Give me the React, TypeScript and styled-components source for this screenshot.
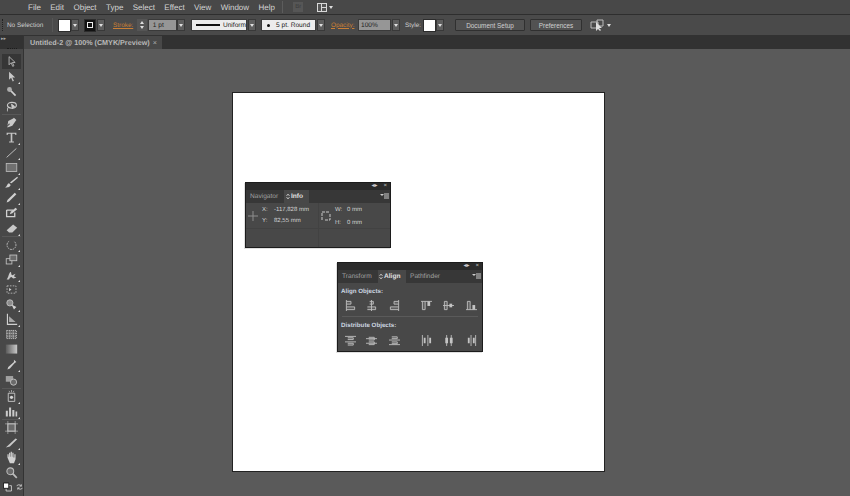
import React from "react";
import styled, { createGlobalStyle } from "styled-components";

const GlobalStyle = createGlobalStyle`
  *, *::before, *::after {
    box-sizing: border-box;
  }
  html, body {
    margin: 0;
    padding: 0;
    background: #5a5a5a;
  }
  body {
    width: 850px;
    height: 496px;
    overflow: hidden;
    font-family: "Liberation Sans", Arial, sans-serif;
    text-rendering: geometricPrecision;
  }
`;

const MENU = ["File", "Edit", "Object", "Type", "Select", "Effect", "View", "Window", "Help"];

type Tool = { icon: React.ReactNode; more?: boolean; active?: boolean };

// tool icons on a 16x16 box, split where the rail has a divider
const TOOL_GROUPS: Tool[][] = [
  [
    { active: true, icon: <path d="M5 2v10l2.500-2.500L9.500 14l1.500-.8-2-4h3.500z" fill="none" stroke="#c4c4c4" /> },
    { more: true, icon: <path d="M5 2v10l2.500-2.500L9.500 14l1.500-.8-2-4h3.500z" fill="#c8c8c8" /> },
    {
      icon: (
        <>
          <path d="M7 7l6 6" stroke="#cfcfcf" strokeWidth="2" />
          <circle cx="5.500" cy="5.500" r="3" fill="#adadad" />
        </>
      ),
    },
    {
      icon: (
        <>
          <ellipse cx="8.500" cy="6.500" rx="5.500" ry="3.600" fill="none" stroke="#c8c8c8" strokeWidth="1.400" />
          <path d="M4 9c-1 1-1 3-1 5M8 5l4 3-3 3z" stroke="#c8c8c8" fill="#c8c8c8" />
        </>
      ),
    },
  ],
  [
    { more: true, icon: <path d="M11 2l3 3-1 1-4 6-6 2 0-1 3-3-1-1-2 3 1-6 6-3z" fill="#cacaca" /> },
    { more: true, icon: <path d="M2 2h12v3h-1l-1-1.500H9V13h2v1H5v-1h2V3.500H4L3 5H2z" fill="#c4c4c4" /> },
    { more: true, icon: <path d="M2 14L14 3" stroke="#c8c8c8" strokeWidth="1.100" /> },
    { more: true, icon: <rect x="1.500" y="3" width="13" height="10" fill="#707070" stroke="#bdbdbd" /> },
    { more: true, icon: <path d="M15 1l1 1-8 7-2-1zM5 9l2 2c-1 3-4 3-7 3 3-1 2-4 5-5z" fill="#d0d0d0" /> },
    { more: true, icon: <path d="M12 2l2 2-9 9-3 1 1-3z" fill="#d0d0d0" /> },
    {
      icon: (
        <>
          <path d="M2 5h8M2 5v8h10V8" fill="none" stroke="#d0d0d0" strokeWidth="1.600" />
          <path d="M13 2l2 2-6 5-3 1 1-3z" fill="#d0d0d0" />
        </>
      ),
    },
    { more: true, icon: <path d="M10 3l5 4-6 6H5L2 10z" fill="#c8c8c8" /> },
  ],
  [
    { more: true, icon: <path d="M5 4a5.500 5.500 0 1 0 6 0" fill="none" stroke="#bdbdbd" strokeDasharray="2 1" strokeWidth="1.200" /> },
    {
      more: true,
      icon: (
        <>
          <rect x="1.500" y="7" width="7" height="6.500" fill="none" stroke="#c8c8c8" />
          <rect x="6" y="2.500" width="8.500" height="7" fill="#6a6a6a" stroke="#c8c8c8" />
        </>
      ),
    },
    { more: true, icon: <path d="M2 14c2-1 3-9 5-9 1 0 0 3 2 4l4-2-2 3 3 2-4 1-2-2-2 1-1 2z" fill="#cacaca" /> },
    {
      icon: (
        <>
          <rect x="2.500" y="3.500" width="11" height="9" fill="none" stroke="#c0c0c0" strokeDasharray="2 1.500" />
          <path d="M5 6l3 2-3 2z" fill="#d0d0d0" />
        </>
      ),
    },
    {
      more: true,
      icon: (
        <>
          <circle cx="6" cy="6" r="3.800" fill="#8c8c8c" stroke="#c8c8c8" />
          <path d="M8 8l6 3-3 3z" fill="#d4d4d4" />
        </>
      ),
    },
    {
      more: true,
      icon: (
        <>
          <path d="M3 1v13h12" fill="none" stroke="#d0d0d0" strokeWidth="1.400" />
          <path d="M5 4l8 7H5z" fill="#a8a8a8" />
        </>
      ),
    },
    { icon: <path d="M2 3h12v10H2zM6 3v10M10 3v10M2 6.500h12M2 10h12" fill="#5c5c5c" stroke="#cfcfcf" strokeDasharray="1.500 1" /> },
    {
      icon: (
        <>
          <linearGradient id="toolGrad">
            <stop offset="0" stopColor="#5a5a5a" />
            <stop offset="1" stopColor="#c8c8c8" />
          </linearGradient>
          <rect x="1" y="2" width="14" height="11" fill="url(#toolGrad)" />
        </>
      ),
    },
    { more: true, icon: <path d="M11 2l3 3-2 1-6 7-3 1 1-3 7-6z" fill="#cfcfcf" /> },
    {
      icon: (
        <>
          <rect x="1" y="2.500" width="9" height="7" fill="#a0a0a0" />
          <circle cx="10.500" cy="10" r="3.800" fill="#6a6a6a" stroke="#cfcfcf" />
        </>
      ),
    },
  ],
  [
    {
      more: true,
      icon: (
        <>
          <path d="M5 1l1 2M8 0v3M11 1l-1 2" stroke="#b0b0b0" />
          <path d="M4 4h8v10H4z" fill="none" stroke="#d4d4d4" />
          <circle cx="8" cy="9" r="2" fill="#d4d4d4" />
        </>
      ),
    },
    { more: true, icon: <path d="M1 14V7h2.500v7zM5 14V3h2.500v11zM9 14V6h2.500v8zM13 14V8h2v6z" fill="#cacaca" /> },
  ],
  [
    {
      icon: (
        <>
          <rect x="3.500" y="3.500" width="9" height="9" fill="#6a6a6a" stroke="#c8c8c8" />
          <path d="M3.500 0v16M12.500 0v16M0 3.500h16M0 12.500h16" stroke="#c8c8c8" strokeWidth=".7" />
        </>
      ),
    },
    { more: true, icon: <path d="M1 14L13 3l2 1-9 9z" fill="#cacaca" /> },
    { more: true, icon: <path d="M3 8V4h1.500v3H5V2h1.500v5H7V1h1.500v6H9V2h1.500v6l1 0V4H13v6l-2 5H6z" fill="#d0d0d0" /> },
    {
      icon: (
        <>
          <circle cx="6.500" cy="6.500" r="4.200" fill="#6a6a6a" stroke="#bdbdbd" strokeWidth="1.300" />
          <path d="M9.500 9.500l5 5" stroke="#bdbdbd" strokeWidth="2.200" />
        </>
      ),
    },
  ],
];

const Window = styled.div`
  width: 850px;
  height: 496px;
  display: flex;
  flex-direction: column;
  color: #d4d4d4;
`;
const MenuBar = styled.div`
  height: 15px;
  flex: none;
  display: flex;
  align-items: center;
  padding-left: 28px;
  background: #484848;
  border-bottom: 1px solid #2e2e2e;
`;
const MenuItem = styled.span`
  font-size: 8px;
  margin-right: 9.4px;
  color: #d4d4d4;
`;
const MenuSep = styled.div`
  width: 1px;
  height: 12px;
  background: #5c5c5c;
  margin: 0 10px 0 -2px;
`;
const BridgeBox = styled.div`
  width: 10px;
  height: 10px;
  background: #565656;
  color: #3a3a3a;
  font-size: 6px;
  text-align: center;
  line-height: 10px;
  margin-right: 14px;
`;
const ControlBar = styled.div`
  height: 20px;
  flex: none;
  display: flex;
  align-items: center;
  background: #4a4a4a;
`;
const Grip = styled.div`
  width: 1px;
  height: 12px;
  margin: 0 4px 0 2px;
  border-left: 1px dotted #222;
`;
const Label = styled.span<{ $w: number; $ml?: number; $accent?: boolean }>`
  width: ${(p) => p.$w}px;
  margin-left: ${(p) => p.$ml ?? 0}px;
  font-size: 6.4px;
  white-space: nowrap;
  color: ${(p) => (p.$accent ? "#c97f35" : "#cfcfcf")};
  text-decoration: ${(p) => (p.$accent ? "underline" : "none")};
`;
const BarSep = styled.div`
  width: 1px;
  height: 14px;
  margin-left: 2px;
  background: #565656;
`;
const FillSwatch = styled.div<{ $ml: number }>`
  width: 13px;
  height: 13px;
  margin-left: ${(p) => p.$ml}px;
  background: #fff;
  border: 1px solid #2c2c2c;
`;
const StrokeSwatch = styled.div`
  width: 12px;
  height: 13px;
  margin-left: 5px;
  background: #111;
  border: 1px solid #2c2c2c;
  display: flex;
  align-items: center;
  justify-content: center;
  &::after {
    content: "";
    width: 6px;
    height: 6px;
    border: 1.5px solid #eee;
  }
`;
const Drop = styled.div<{ $ml?: number }>`
  width: 8px;
  height: 12px;
  margin-left: ${(p) => p.$ml ?? 0}px;
  background: #5e5e5e;
  border: 1px solid #393939;
  display: flex;
  align-items: center;
  justify-content: center;
  &::after {
    content: "";
    border-left: 2.5px solid transparent;
    border-right: 2.5px solid transparent;
    border-top: 3px solid #e0e0e0;
  }
`;
const Spinner = styled.div`
  width: 10px;
  height: 12px;
  margin-left: 4px;
  display: flex;
  flex-direction: column;
  align-items: center;
  justify-content: center;
  gap: 2px;
  background: #555;
  &::before,
  &::after {
    content: "";
    border-left: 2.5px solid transparent;
    border-right: 2.5px solid transparent;
  }
  &::before {
    border-bottom: 3px solid #ddd;
  }
  &::after {
    border-top: 3px solid #ddd;
  }
`;
const Field = styled.div<{ $w: number; $ml?: number; $light?: boolean }>`
  width: ${(p) => p.$w}px;
  height: 12px;
  margin-left: ${(p) => p.$ml ?? 0}px;
  padding-left: 2px;
  display: flex;
  align-items: center;
  font-size: 6.6px;
  color: #222;
  background: ${(p) => (p.$light ? "#ececec" : "#969696")};
  border: 1px solid #3a3a3a;
  white-space: nowrap;
  overflow: hidden;
`;
const LineSample = styled.span`
  width: 25px;
  height: 1.5px;
  margin: 0 3px 0 2px;
  background: #111;
`;
const Dot = styled.span`
  width: 3px;
  height: 3px;
  margin: 0 6px 0 3px;
  border-radius: 50%;
  background: #111;
`;
const BarButton = styled.button<{ $w: number; $ml: number }>`
  width: ${(p) => p.$w}px;
  height: 12px;
  margin-left: ${(p) => p.$ml}px;
  padding: 0;
  font-family: inherit;
  font-size: 6.4px;
  color: #d0d0d0;
  background: #525252;
  border: 1px solid #303030;
  border-radius: 1px;
`;
const SmallArrow = styled.span<{ $ml: number }>`
  margin-left: ${(p) => p.$ml}px;
  border-left: 2.5px solid transparent;
  border-right: 2.5px solid transparent;
  border-top: 3px solid #ddd;
`;
const ActionIcon = styled.svg`
  margin-left: 8px;
  flex: none;
`;
const Main = styled.div`
  flex: 1;
  min-height: 0;
  display: flex;
`;
const ToolRail = styled.div`
  width: 24px;
  flex: none;
  background: #484848;
  border-right: 1px solid #333;
  display: flex;
  flex-direction: column;
`;
const RailHead = styled.div`
  height: 14px;
  flex: none;
  position: relative;
  background: #323232;
  color: #a8a8a8;
  font-size: 5px;
  line-height: 9px;
  padding-left: 1px;
`;
const RailGrip = styled.div`
  height: 1px;
  margin: 4px 6px 0;
  flex: none;
  border-top: 1px dotted #1c1c1c;
`;
const ToolList = styled.div`
  margin-top: 4.5px;
  display: flex;
  flex-direction: column;
`;
const ToolCell = styled.div<{ $active?: boolean }>`
  position: relative;
  height: 15.1px;
  margin: 0 2px;
  display: flex;
  align-items: center;
  justify-content: center;
  background: ${(p) => (p.$active ? "#363636" : "transparent")};
  svg {
    width: 13px;
    height: 13px;
  }
`;
const Corner = styled.span`
  position: absolute;
  right: 1px;
  bottom: 0;
  border-left: 2px solid transparent;
  border-bottom: 2px solid #ddd;
`;
const RailRule = styled.div`
  height: 1px;
  margin: 0 2px;
  background: #585858;
`;
const SwatchPair = styled.div`
  display: flex;
  align-items: center;
  gap: 4px;
  margin: 2px 0 0 3px;
`;
const Workspace = styled.div`
  flex: 1;
  display: flex;
  flex-direction: column;
  min-width: 0;
`;
const TabBar = styled.div`
  height: 14px;
  flex: none;
  display: flex;
  align-items: flex-end;
  background: #323232;
`;
const DocTab = styled.div`
  width: 138px;
  height: 13px;
  padding-left: 6px;
  display: flex;
  align-items: center;
  justify-content: space-between;
  font-size: 7.2px;
  font-weight: 700;
  color: #b8b8b8;
  background: #484848;
  white-space: nowrap;
`;
const TabClose = styled.span`
  margin-right: 5px;
  font-weight: 400;
  color: #aaa;
`;
const Canvas = styled.div`
  flex: 1;
  position: relative;
  background: #5a5a5a;
  padding: 43px 0 0 208px;
`;
const Artboard = styled.div`
  width: 373px;
  height: 380px;
  background: #fff;
  border: 1px solid #222;
`;
const Panel = styled.div<{ $x: number; $y: number; $h: number }>`
  position: absolute;
  left: ${(p) => p.$x}px;
  top: ${(p) => p.$y}px;
  width: 146px;
  height: ${(p) => p.$h}px;
  display: flex;
  flex-direction: column;
  background: #484848;
  border: 1px solid #1c1c1c;
  box-shadow: -1px 1px 0 rgba(0, 0, 0, 0.12);
`;
const PanelHead = styled.div`
  height: 7px;
  flex: none;
  display: flex;
  align-items: center;
  justify-content: flex-end;
  gap: 6px;
  padding-right: 3px;
  background: #2b2b2b;
  color: #d0d0d0;
  font-size: 6px;
  line-height: 7px;
`;
const PanelTabs = styled.div`
  height: 13px;
  flex: none;
  display: flex;
  align-items: stretch;
  background: #373737;
`;
const PanelTab = styled.div<{ $w: number; $pad?: number; $active?: boolean }>`
  width: ${(p) => p.$w}px;
  padding-left: ${(p) => p.$pad ?? 4}px;
  display: flex;
  align-items: center;
  gap: 1px;
  font-size: 6.6px;
  white-space: nowrap;
  font-weight: ${(p) => (p.$active ? 700 : 400)};
  color: ${(p) => (p.$active ? "#e0e0e0" : "#a0a0a0")};
  background: ${(p) => (p.$active ? "#484848" : "transparent")};
`;
const PanelMenu = styled.svg`
  margin: 3px 1px 0 auto;
  width: 9px;
  height: 7px;
  flex: none;
`;
const InfoBody = styled.div`
  flex: 1;
  display: grid;
  grid-template-columns: 72px 1fr;
  grid-template-rows: 25px 1fr;
`;
const InfoCell = styled.div<{ $right?: boolean; $bottom?: boolean }>`
  display: flex;
  align-items: flex-start;
  padding: 3px 0 0 2px;
  border-left: ${(p) => (p.$right ? "1px solid #424242" : "none")};
  border-top: ${(p) => (p.$bottom ? "1px solid #424242" : "none")};
`;
const InfoIcon = styled.svg<{ $mr: number }>`
  margin: 5px ${(p) => p.$mr}px 0 0;
  flex: none;
`;
const InfoGrid = styled.div<{ $col: number; $gap: number }>`
  display: grid;
  grid-template-columns: ${(p) => p.$col}px auto;
  row-gap: ${(p) => p.$gap}px;
  font-size: 6px;
  line-height: 8px;
  color: #d2d2d2;
  white-space: nowrap;
`;
const SectionTitle = styled.div<{ $mt: number }>`
  margin: ${(p) => p.$mt}px 0 0 3px;
  font-size: 6.2px;
  line-height: 8px;
  font-weight: 700;
  color: #ccd6e0;
`;
const AlignRow = styled.div`
  display: grid;
  grid-template-columns: 21px 23px 32px 22px 23px 11px;
  margin: 4.5px 0 0 7px;
  svg {
    width: 11px;
    height: 11px;
  }
`;
const Rule = styled.div`
  height: 1px;
  margin: 5px 4px 0;
  background: #5a5a5a;
`;

const AlignGlyph = ({ d, box }: { d: string; box: string }) => (
  <svg viewBox="0 0 12 12">
    <path d={d} fill="#5e5e5e" stroke="#bdbdbd" />
    <path d={box} fill="#c4c4c4" />
  </svg>
);

const TabArrows = () => (
  <svg width="4" height="7" viewBox="0 0 4 7">
    <path d="M.5 3L2 1l1.500 2M.5 4L2 6l1.500-2" fill="none" stroke="#d0d0d0" strokeWidth=".8" />
  </svg>
);

const ALIGN_GLYPHS = [
  ["M1.500 0v12M1.500 1.500h5v3h-5M1.500 7.500h9v3h-9", ""],
  ["M6 0v12M4 1.500h4v3H4M1.500 7.500h9v3h-9", ""],
  ["M10.500 0v12M10.500 1.500h-5v3h5M10.500 7.500h-9v3h9", ""],
  ["M0 1.500h12M1.500 1.500v9h3v-9", "M7 1.500h3v5H7z"],
  ["M0 6h12M1.500 1.500h3v9h-3z", "M7 4h3v4H7z"],
  ["M0 10.500h12M1.500 10.500v-9h3v9", "M7 5.500h3v5H7z"],
];
const DIST_GLYPHS = [
  ["M0 1.500h12M0 7.500h12M3 3h6v2H3M3 9h6v2H3", ""],
  ["M0 4h12M0 9h12M3 2.500h6v3H3M3 7.500h6v3H3", ""],
  ["M0 5.500h12M0 10.500h12M3 2h6v2H3M3 7.500h6v2H3", ""],
  ["M1.500 0v12M7.500 0v12", "M3 3h2v6H3zM9 3h2v6H9z"],
  ["M4 0v12M9 0v12", "M2.500 3h3v6h-3zM7.500 3h3v6h-3z"],
  ["M5.500 0v12M10.500 0v12", "M2 3h2v6H2zM7.500 3h2v6h-2z"],
];

const MenuGlyph = () => (
  <PanelMenu viewBox="0 0 9 7">
    <path d="M0 1l2 2 2-2z" fill="#ccc" />
    <path d="M4 1h5M4 3h5M4 5h5" stroke="#ccc" />
  </PanelMenu>
);

export default function App() {
  return (
    <>
      <GlobalStyle />
      <Window>
        <MenuBar>
          {MENU.map((m) => (
            <MenuItem key={m}>{m}</MenuItem>
          ))}
          <MenuSep />
          <BridgeBox>Br</BridgeBox>
          <svg width="10" height="9" viewBox="0 0 10 9">
            <path d="M0 0h10v9H0z" fill="#d8d8d8" />
            <path d="M1 1h3v7H1zM5 1h4v3H5zM5 5h4v3H5z" fill="#555" />
          </svg>
          <SmallArrow $ml={2} />
        </MenuBar>
        <ControlBar>
          <Grip />
          <Label $w={43}>No Selection</Label>
          <BarSep />
          <FillSwatch $ml={5} />
          <Drop />
          <StrokeSwatch />
          <Drop $ml={1} />
          <Label $w={20} $ml={8} $accent>
            Stroke:
          </Label>
          <Spinner />
          <Field $w={29} $ml={1}>
            &nbsp;1 pt
          </Field>
          <Drop $ml={0} />
          <Field $w={56} $ml={6} $light>
            <LineSample />
            Uniform
          </Field>
          <Drop $ml={1} />
          <Field $w={55} $ml={5} $light>
            <Dot />5 pt. Round
          </Field>
          <Drop $ml={1} />
          <Label $w={24} $ml={6} $accent>
            Opacity:
          </Label>
          <Field $w={33} $ml={3}>
            100%
          </Field>
          <Drop $ml={1} />
          <Label $w={17} $ml={5}>
            Style:
          </Label>
          <FillSwatch $ml={1} />
          <Drop />
          <BarButton $w={70} $ml={11}>
            Document Setup
          </BarButton>
          <BarButton $w={52} $ml={5}>
            Preferences
          </BarButton>
          <ActionIcon width="15" height="12" viewBox="0 0 15 12">
            <path d="M1 3h7v6H1zM7 1h6v6H7z" fill="none" stroke="#bbb" />
            <path d="M6 3v9l2-2 2 2 1-1-2-2h3z" fill="#ddd" />
          </ActionIcon>
          <SmallArrow $ml={2} />
        </ControlBar>
        <Main>
          <ToolRail>
            <RailHead>
              ▸▸
              <RailGrip />
            </RailHead>
            <ToolList>
              {TOOL_GROUPS.map((group, g) => (
                <React.Fragment key={g}>
                  {g > 0 && <RailRule />}
                  {group.map((tool, i) => (
                    <ToolCell key={i} $active={tool.active}>
                      <svg viewBox="0 0 16 16">{tool.icon}</svg>
                      {tool.more && <Corner />}
                    </ToolCell>
                  ))}
                </React.Fragment>
              ))}
              <SwatchPair>
                <svg width="10" height="10" viewBox="0 0 10 10">
                  <path d="M3.500 3.500h6v6h-6z" fill="none" stroke="#ccc" />
                  <path d="M.5.500h6v6h-6z" fill="#fff" stroke="#111" />
                </svg>
                <svg width="8" height="8" viewBox="0 0 8 8">
                  <path d="M1 3c0-2 4-2 5 0M6 1v2H4M7 5c0 2-4 2-5 0M2 7V5h2" fill="none" stroke="#ccc" />
                </svg>
              </SwatchPair>
            </ToolList>
          </ToolRail>
          <Workspace>
            <TabBar>
              <DocTab>
                Untitled-2 @ 100% (CMYK/Preview)
                <TabClose>×</TabClose>
              </DocTab>
            </TabBar>
            <Canvas>
              <Artboard />
              <Panel $x={221} $y={133} $h={66}>
                <PanelHead>
                  <span>◂▸</span>
                  <span>×</span>
                </PanelHead>
                <PanelTabs>
                  <PanelTab $w={38}>Navigator</PanelTab>
                  <PanelTab $w={25} $pad={2} $active>
                    <TabArrows />
                    Info
                  </PanelTab>
                  <MenuGlyph />
                </PanelTabs>
                <InfoBody>
                  <InfoCell>
                    <InfoIcon $mr={4} width="10" height="10" viewBox="0 0 10 10">
                      <path d="M5 0v10M0 5h10" stroke="#8e8e8e" />
                    </InfoIcon>
                    <InfoGrid $col={12} $gap={3}>
                      <span>X:</span>
                      <span>-117,828 mm</span>
                      <span>Y:</span>
                      <span>82,55 mm</span>
                    </InfoGrid>
                  </InfoCell>
                  <InfoCell $right>
                    <InfoIcon $mr={4} width="10" height="10" viewBox="0 0 10 10">
                      <path d="M1 9V1h7M9 3v6H3" fill="none" stroke="#c8c8c8" strokeDasharray="3 1" />
                    </InfoIcon>
                    <InfoGrid $col={12} $gap={5}>
                      <span>W:</span>
                      <span>0 mm</span>
                      <span>H:</span>
                      <span>0 mm</span>
                    </InfoGrid>
                  </InfoCell>
                  <InfoCell $bottom />
                  <InfoCell $right $bottom />
                </InfoBody>
              </Panel>
              <Panel $x={313} $y={213} $h={90}>
                <PanelHead>
                  <span>◂▸</span>
                  <span>×</span>
                </PanelHead>
                <PanelTabs>
                  <PanelTab $w={40}>Transform</PanelTab>
                  <PanelTab $w={28} $pad={1} $active>
                    <TabArrows />
                    Align
                  </PanelTab>
                  <PanelTab $w={40}>Pathfinder</PanelTab>
                  <MenuGlyph />
                </PanelTabs>
                <SectionTitle $mt={4.5}>Align Objects:</SectionTitle>
                <AlignRow>
                  {ALIGN_GLYPHS.map(([d, box]) => (
                    <AlignGlyph key={d} d={d} box={box} />
                  ))}
                </AlignRow>
                <Rule />
                <SectionTitle $mt={5}>Distribute Objects:</SectionTitle>
                <AlignRow>
                  {DIST_GLYPHS.map(([d, box]) => (
                    <AlignGlyph key={d} d={d} box={box} />
                  ))}
                </AlignRow>
              </Panel>
            </Canvas>
          </Workspace>
        </Main>
      </Window>
    </>
  );
}
